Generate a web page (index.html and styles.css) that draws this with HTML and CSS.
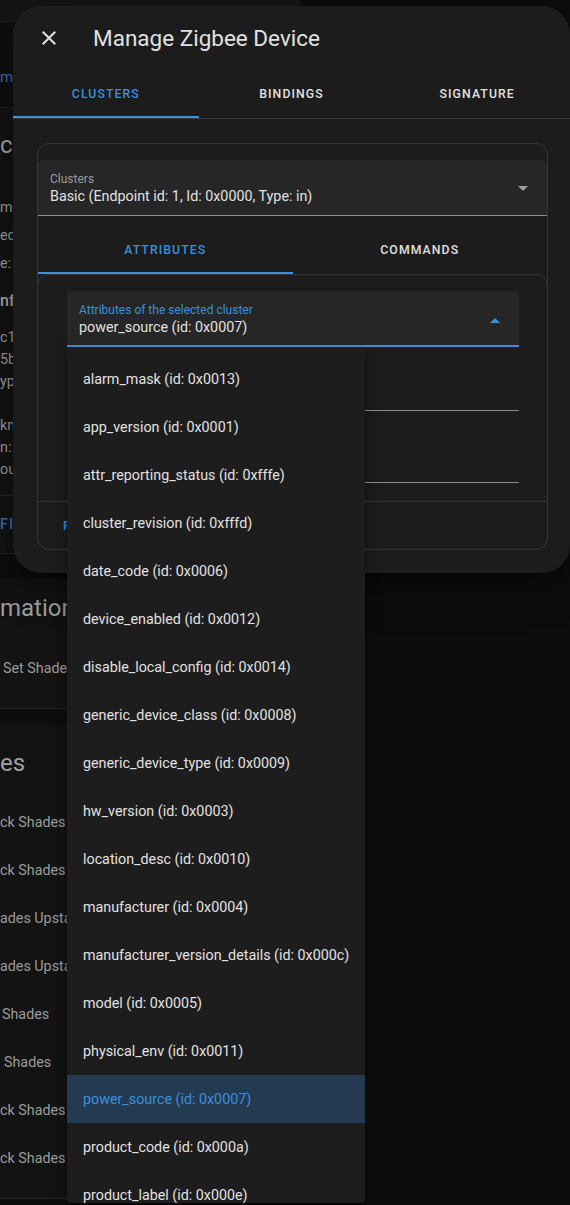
FILE: index.html
```html
<!DOCTYPE html>
<html lang="en">
<head>
<meta charset="utf-8">
<title>Manage Zigbee Device</title>
<link rel="stylesheet" href="styles.css">
</head>
<body>
<div class="bg-page">
  <div class="bg-top"></div>
  <div class="bg-linkbar"><span class="bg-link">m</span></div>
  <section class="bg-card">
    <div class="bg-h1">ce</div>
    <div class="bg-group28">
      <div>m</div>
      <div>ed</div>
      <div>e: (</div>
    </div>
    <div class="bg-sub">nfo</div>
    <div class="bg-group22 g1">
      <div>c1</div>
      <div>5b:</div>
      <div>yp</div>
    </div>
    <div class="bg-group22 g2">
      <div>kn</div>
      <div>n:</div>
      <div>ou</div>
    </div>
    <div class="bg-actions">FIG</div>
  </section>
  <section class="bg-card card2">
    <div class="bg-h1">mation</div>
    <div class="bg-row single pad3">Set Shades</div>
  </section>
  <section class="bg-card card3">
    <div class="bg-h1">es</div>
    <div class="bg-rows">
      <div>ck Shades</div>
      <div>ck Shades</div>
      <div>ades Upstairs</div>
      <div>ades Upstairs</div>
      <div class="pad2">Shades</div>
      <div class="pad4">Shades</div>
      <div>ck Shades</div>
      <div>ck Shades</div>
    </div>
  </section>
</div>

<div class="dialog">
  <header class="dlg-header">
    <button class="icon-btn" aria-label="Close">
      <svg viewBox="0 0 24 24" width="24" height="24"><path d="M19,6.41L17.59,5L12,10.59L6.41,5L5,6.41L10.59,12L5,17.59L6.41,19L12,13.41L17.59,19L19,17.59L13.41,12L19,6.41Z"/></svg>
    </button>
    <h2 class="dlg-title">Manage Zigbee Device</h2>
  </header>
  <nav class="tabs">
    <div class="tab active">Clusters</div>
    <div class="tab">Bindings</div>
    <div class="tab">Signature</div>
  </nav>
  <div class="dlg-body">
    <div class="card outer">
      <div class="select">
        <div class="sel-label">Clusters</div>
        <div class="sel-value">Basic (Endpoint id: 1, Id: 0x0000, Type: in)</div>
        <svg class="sel-arrow" viewBox="0 0 24 24" width="24" height="24"><path d="M7,10L12,15L17,10H7Z"/></svg>
      </div>
      <nav class="subtabs">
        <div class="tab active">Attributes</div>
        <div class="tab">Commands</div>
      </nav>
      <div class="card inner">
        <div class="inner-content">
          <div class="select focused">
            <div class="sel-label">Attributes of the selected cluster</div>
            <div class="sel-value">power_source (id: 0x0007)</div>
            <svg class="sel-arrow" viewBox="0 0 24 24" width="24" height="24"><path d="M7,15L12,10L17,15H7Z"/></svg>
          </div>
          <div class="field"></div>
          <div class="field second"></div>
        </div>
        <div class="card-actions">
          <button class="text-btn">Read attribute</button>
        </div>
      </div>
    </div>
  </div>
</div>

<ul class="menu">
  <li>alarm_mask (id: 0x0013)</li>
  <li>app_version (id: 0x0001)</li>
  <li>attr_reporting_status (id: 0xfffe)</li>
  <li>cluster_revision (id: 0xfffd)</li>
  <li>date_code (id: 0x0006)</li>
  <li>device_enabled (id: 0x0012)</li>
  <li>disable_local_config (id: 0x0014)</li>
  <li>generic_device_class (id: 0x0008)</li>
  <li>generic_device_type (id: 0x0009)</li>
  <li>hw_version (id: 0x0003)</li>
  <li>location_desc (id: 0x0010)</li>
  <li>manufacturer (id: 0x0004)</li>
  <li>manufacturer_version_details (id: 0x000c)</li>
  <li>model (id: 0x0005)</li>
  <li>physical_env (id: 0x0011)</li>
  <li class="selected">power_source (id: 0x0007)</li>
  <li>product_code (id: 0x000a)</li>
  <li>product_label (id: 0x000e)</li>
</ul>
</body>
</html>
```
FILE: styles.css
```css
* { box-sizing: border-box; }

html, body {
  margin: 0;
  height: 1205px;
  overflow: hidden;
}

body {
  position: relative;
  width: 570px;
  background: #0d0d0d;
  font-family: Roboto, "Noto Sans", sans-serif;
  color: #e1e1e1;
}

/* ---------- background page (behind the dialog) ---------- */
.bg-page {
  width: 300px;
  color: #9a9a9a;
  font-size: 14.3px;
  white-space: nowrap;
  overflow: hidden;
}

.bg-top {
  height: 22px;
  background: #151515;
  border-bottom: 1px solid #222;
}

.bg-linkbar {
  height: 86px;
  background: #0f0f0f;
  border-bottom: 1px solid #232323;
  padding-top: 45px;
  line-height: 20px;
  font-size: 15px;
}

.bg-link { color: #2f74b3; }

.bg-card {
  background: #131313;
}

.bg-h1 {
  font-size: 24px;
  line-height: 32px;
  padding-top: 21px;
  color: #a0a0a0;
}

.bg-group28 {
  margin-top: 32px;
  line-height: 28px;
}

.bg-sub {
  margin-top: 10px;
  font-size: 16px;
  font-weight: 500;
  line-height: 28px;
  color: #a8a8a8;
}

.bg-group22 { line-height: 22px; }
.bg-group22.g1 { margin-top: 11px; }
.bg-group22.g2 { margin-top: 22px; }

.bg-actions {
  margin-top: 15px;
  height: 59px;
  line-height: 57px;
  border-top: 1px solid #262626;
  border-bottom: 1px solid #262626;
  color: #2f74b3;
  font-weight: 500;
  letter-spacing: 1.1px;
}

.bg-card.card2 {
  margin-top: 24px;
  padding-bottom: 29px;
  border-bottom: 1px solid #222;
}
.bg-card.card2 .bg-h1 { padding-top: 14px; }

.bg-row.single {
  margin-top: 33px;
  line-height: 22px;
}

.bg-card.card3 {
  margin-top: 16px;
  padding-bottom: 16px;
  border-bottom: 1px solid #222;
}
.bg-card.card3 .bg-h1 { padding-top: 22px; }

.bg-rows {
  margin-top: 19px;
  line-height: 48px;
}

.pad2 { padding-left: 2px; }
.pad3 { padding-left: 3px; }
.pad4 { padding-left: 4px; }

/* ---------- dialog ---------- */
.dialog {
  position: absolute;
  left: 13px;
  top: 6px;
  width: 557px;
  background: #1c1c1c;
  border-radius: 28px;
  box-shadow: 0 11px 15px -7px rgba(0,0,0,.2), 0 24px 38px 3px rgba(0,0,0,.14), 0 9px 46px 8px rgba(0,0,0,.12);
}

.dlg-header {
  display: flex;
  align-items: center;
  height: 64px;
  padding-left: 12px;
}

.icon-btn {
  width: 48px;
  height: 48px;
  padding: 0;
  border: 0;
  background: none;
  display: flex;
  align-items: center;
  justify-content: center;
}
.icon-btn svg { fill: #e1e1e1; }

.dlg-title {
  margin: 0 0 0 20px;
  font-size: 22.5px;
  font-weight: 400;
  line-height: 28px;
  color: #e1e1e1;
}

.tabs, .subtabs {
  display: flex;
}

.tabs {
  height: 49px;
  border-bottom: 1px solid #3a3a3a;
}

.tab {
  flex: 1;
  height: 48px;
  display: flex;
  align-items: center;
  justify-content: center;
  font-size: 12.25px;
  font-weight: 500;
  letter-spacing: 1.09px;
  text-transform: uppercase;
  color: #e1e1e1;
  border-bottom: 2px solid transparent;
  padding-top: 2px;
}

.tab.active {
  color: #3a8fde;
  border-bottom-color: #3a8fde;
}

.dlg-body {
  padding: 24px 22px 23px 24px;
}

.card {
  border: 1px solid #363636;
  border-radius: 12px;
  background: #1c1c1c;
}

.card.outer {
  padding-top: 16px;
}

.select {
  position: relative;
  height: 56px;
  background: #262626;
  border-radius: 4px 4px 0 0;
  border-bottom: 1px solid #8c8c8c;
  padding: 12px 48px 0 12px;
}

.sel-label {
  font-size: 12px;
  line-height: 14px;
  color: #9b9b9b;
}

.sel-value {
  margin-top: 0;
  font-size: 14.3px;
  line-height: 20px;
  color: #e1e1e1;
  white-space: nowrap;
}

.sel-arrow {
  position: absolute;
  right: 12px;
  top: 16px;
  fill: #9e9e9e;
}

.select.focused {
  border-bottom: 2px solid #3a8fde;
}
.select.focused .sel-label { color: #3a8fde; }
.select.focused .sel-arrow { fill: #3a8fde; top: 17px; }

.subtabs {
  margin-top: 10px;
}

.card.inner {
  margin: 0 -1px -1px;
}

.inner-content {
  padding: 16px 28px 18px 29px;
}

.field {
  margin-top: 8px;
  height: 56px;
  border-bottom: 1px solid #8c8c8c;
}
.field.second { margin-top: 16px; }

.card-actions {
  border-top: 1px solid #363636;
  height: 48px;
  display: flex;
  align-items: center;
  padding-left: 17px;
}

.text-btn {
  border: 0;
  background: none;
  padding: 0 8px;
  height: 36px;
  font-family: inherit;
  font-size: 12.25px;
  font-weight: 500;
  letter-spacing: 1.09px;
  text-transform: uppercase;
  color: #3a8fde;
}

/* ---------- dropdown menu (overlay) ---------- */
.menu {
  position: absolute;
  left: 67px;
  top: 347px;
  width: 298px;
  height: 856px;
  margin: 0;
  padding: 8px 0 0;
  list-style: none;
  overflow: hidden;
  background: #1d1d1d;
  border-radius: 4px;
  box-shadow: 0 5px 5px -3px rgba(0,0,0,.2), 0 8px 10px 1px rgba(0,0,0,.14), 0 3px 14px 2px rgba(0,0,0,.12);
}

.menu li {
  height: 48px;
  line-height: 48px;
  padding: 0 16px;
  font-size: 14.3px;
  color: #e1e1e1;
  white-space: nowrap;
}

.menu li.selected {
  background: #243a50;
  color: #3a8fde;
}
```
